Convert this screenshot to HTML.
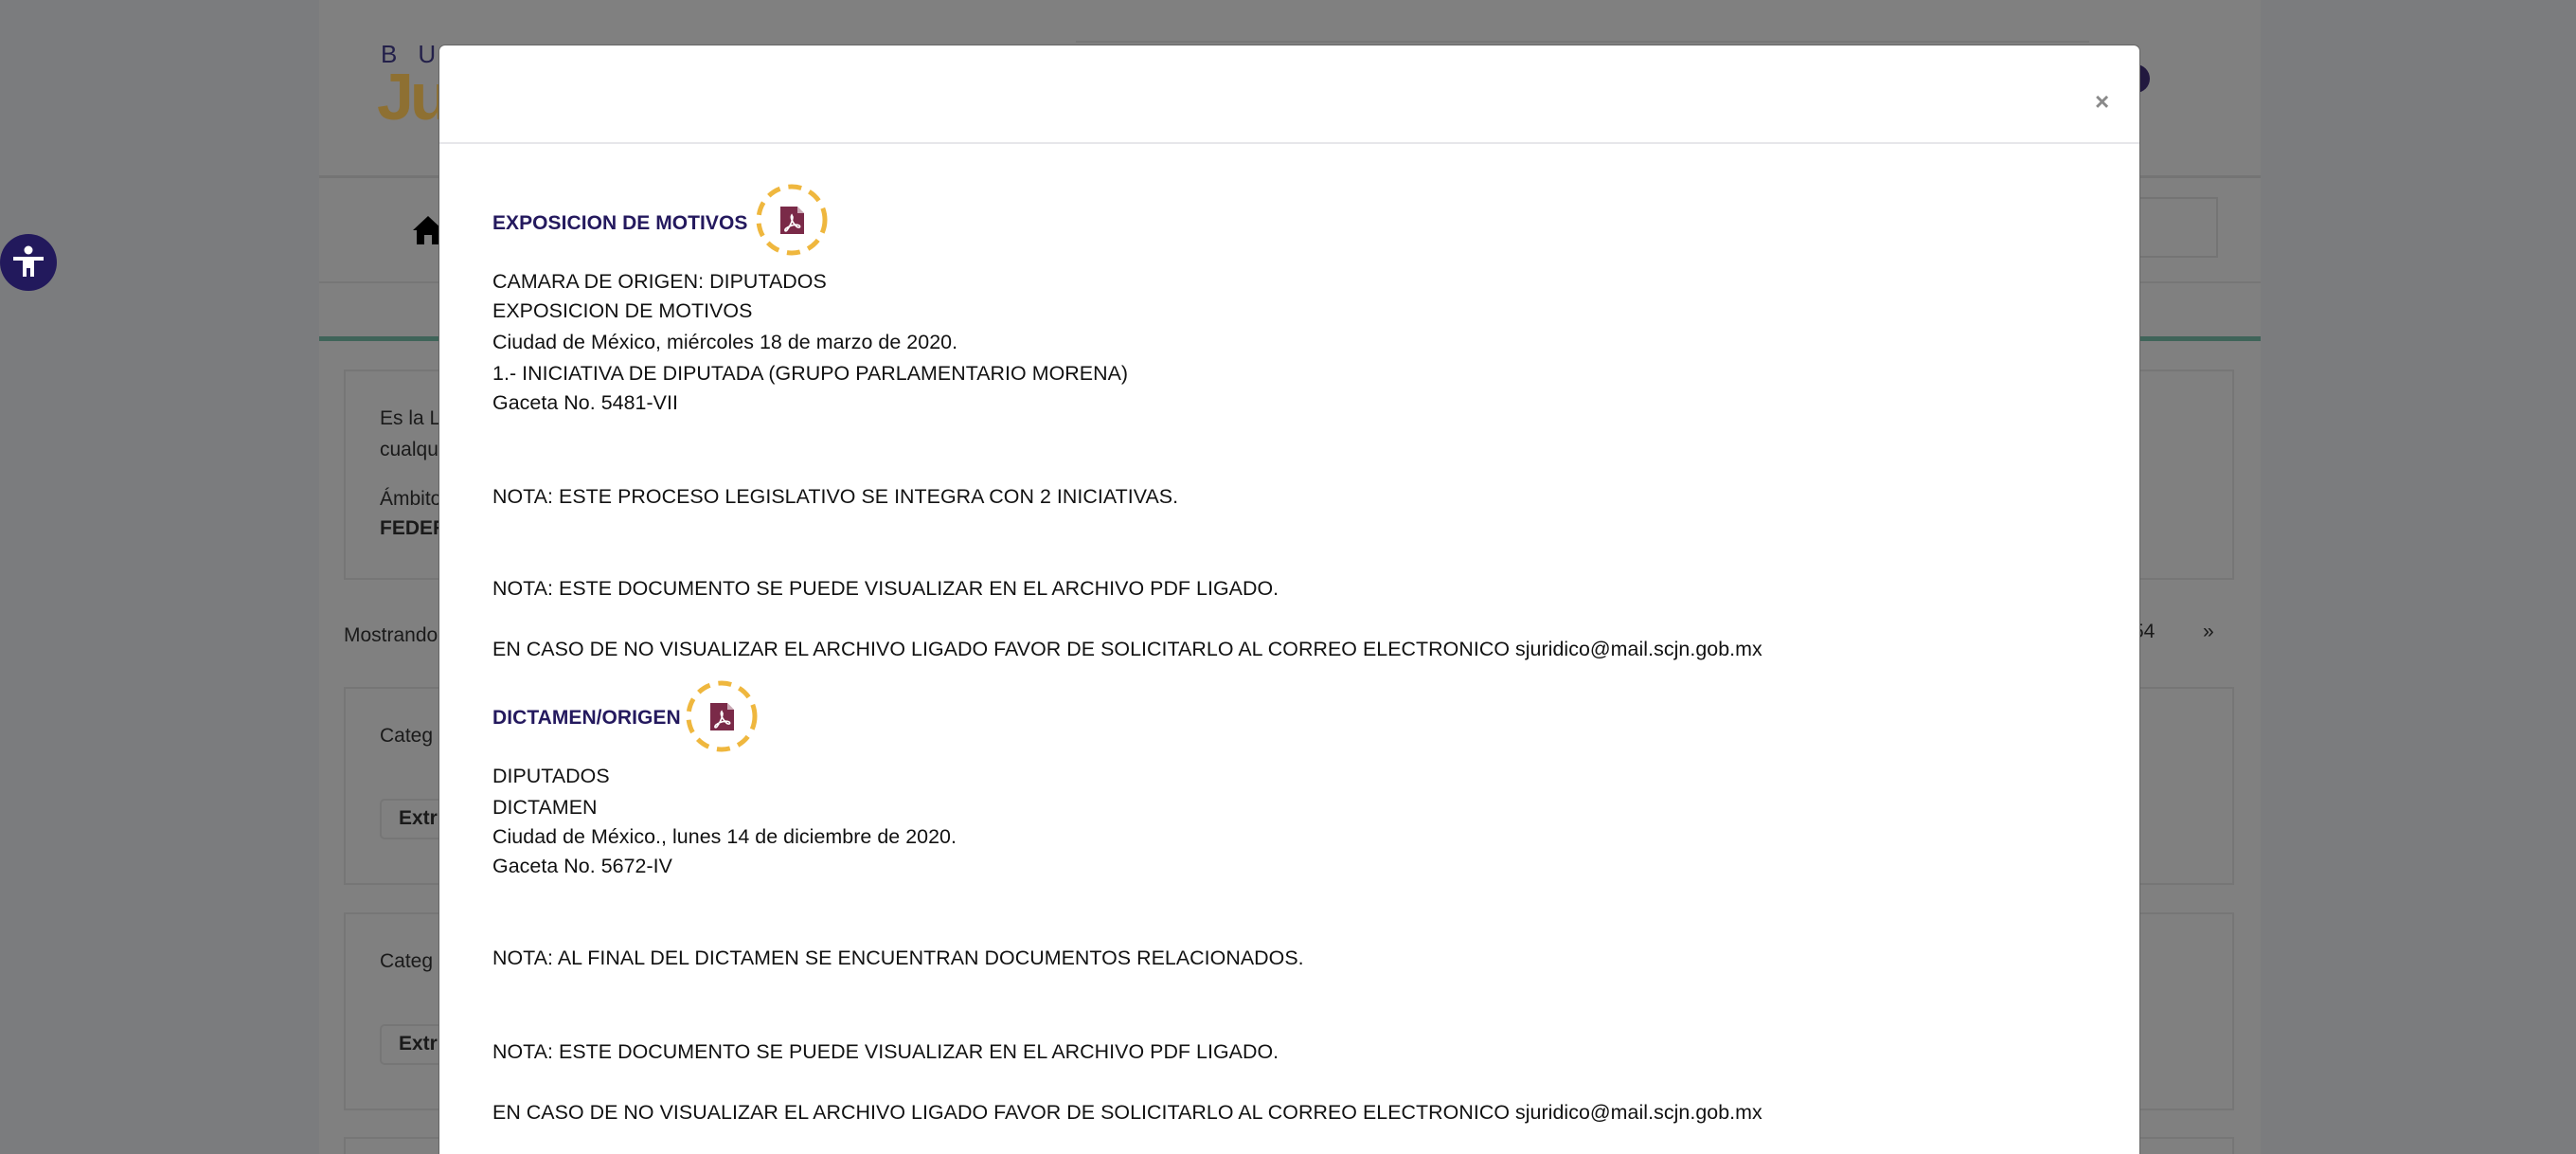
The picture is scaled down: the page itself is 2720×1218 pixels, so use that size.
<!DOCTYPE html>
<html style="overflow:hidden;height:1218px"><head><meta charset="utf-8"><style>
*{margin:0;padding:0;box-sizing:border-box}
body{width:2720px;height:1218px;overflow:hidden;background:#7b7c7e;position:relative;font-family:"Liberation Sans",Arial,sans-serif}
.a{position:absolute}
.bgt{color:#1a1a1a;font-size:21px;white-space:nowrap}
.card{position:absolute;left:363px;width:1996px;border:2px solid #767676;background:#808080}
.t{position:absolute;left:520px;height:32px;line-height:32px;font-size:21.4px;letter-spacing:0.05px;color:#111;white-space:nowrap}
.h{font-weight:bold;color:#24195e;font-size:21px}
</style></head><body>
<div class="a" style="left:337px;top:0;width:2050px;height:1218px;background:#808080"></div>
<div class="a" style="left:337px;top:185px;width:2050px;height:3px;background:#747474"></div>
<div class="a" style="left:337px;top:297px;width:2050px;height:2px;background:#767676"></div>
<div class="a" style="left:337px;top:355px;width:2050px;height:5px;background:#3f6459"></div>
<div class="a" style="left:402px;top:42px;font-size:26px;color:#23204a;letter-spacing:22px">BUS</div>
<div class="a" style="left:398px;top:62px;font-size:70px;font-weight:bold;color:#8e7032;letter-spacing:-4px">Ju</div>
<div class="a" style="left:1136px;top:43px;width:1070px;height:2px;background:#767676"></div>
<div class="a" style="left:2240px;top:68px;width:30px;height:30px;border-radius:50%;background:#22193f"></div>
<svg class="a" style="left:434px;top:225px" width="36" height="36" viewBox="0 0 36 36"><path d="M18 3 L2 18 L6 18 L6 33 L14 33 L14 23 L22 23 L22 33 L30 33 L30 18 L34 18 Z" fill="#000"/></svg>
<div class="a" style="left:2177px;top:208px;width:165px;height:64px;border:2px solid #747474"></div>
<div class="card" style="top:390px;height:222px"></div>
<div class="a bgt" style="left:401px;top:430px">Es la L</div>
<div class="a bgt" style="left:401px;top:463px">cualqu</div>
<div class="a bgt" style="left:401px;top:515px">Ámbito</div>
<div class="a bgt" style="left:401px;top:546px;font-weight:bold">FEDER</div>
<div class="a bgt" style="left:363px;top:659px">Mostrando</div>
<div class="a bgt" style="left:2252px;top:655px">54</div>
<div class="a bgt" style="left:2326px;top:655px">»</div>
<div class="card" style="top:725px;height:209px"></div>
<div class="a bgt" style="left:401px;top:765px">Categ</div>
<div class="a" style="left:401px;top:843px;width:200px;height:43px;border:2px solid #767676;border-radius:5px"></div>
<div class="a bgt" style="left:421px;top:852px;font-weight:bold">Extr</div>
<div class="card" style="top:963px;height:209px"></div>
<div class="a bgt" style="left:401px;top:1003px">Categ</div>
<div class="a" style="left:401px;top:1081px;width:200px;height:43px;border:2px solid #767676;border-radius:5px"></div>
<div class="a bgt" style="left:421px;top:1090px;font-weight:bold">Extr</div>
<div class="card" style="top:1200px;height:18px;border-bottom:none"></div>
<div class="a" style="left:0;top:247px;width:60px;height:60px;border-radius:50%;background:#22195c"></div>
<svg class="a" style="left:0;top:247px" width="60" height="60" viewBox="0 0 60 60"><circle cx="30" cy="17" r="4.5" fill="#fff"/><path d="M14 24 L46 24 L46 28 L36 28 L36 45 L32 45 L32 36 L28 36 L28 45 L24 45 L24 28 L14 28 Z" fill="#fff"/></svg>
<!-- modal -->
<div class="a" style="left:463px;top:47px;width:1797px;height:1171px;background:#fff;border-radius:7px 7px 0 0;border:1px solid #666;border-bottom:none"></div>
<div class="a" style="left:464px;top:150px;width:1795px;height:2px;background:#e6e6ea"></div>
<div class="a" style="left:2212px;top:92px;font-size:26px;font-weight:bold;color:#8a8a8a">×</div>

<div class="t h" style="top:220px">EXPOSICION DE MOTIVOS</div>
<svg class="a" style="left:796px;top:194px" width="80" height="80" viewBox="0 0 80 80"><circle cx="40" cy="38" r="35" fill="none" stroke="#efb73e" stroke-width="5" stroke-dasharray="14 9"/><path d="M28 24 H46 L53 31 V53 H28 Z" fill="#7a2a48"/><path d="M46 24 V31 H53" fill="#fff" opacity=".6"/><path d="M40 33 C38 36 41 41 45 45 C47 47 50 46 48 44 C45 42 38 44 34 47 C32 49 33 51 35 49 C38 45 41 39 41 35 Z" fill="none" stroke="#fff" stroke-width="1.6"/></svg>
<div class="t" style="top:281px">CAMARA DE ORIGEN: DIPUTADOS</div>
<div class="t" style="top:312px">EXPOSICION DE MOTIVOS</div>
<div class="t" style="top:345px">Ciudad de México, miércoles 18 de marzo de 2020.</div>
<div class="t" style="top:378px">1.- INICIATIVA DE DIPUTADA (GRUPO PARLAMENTARIO MORENA)</div>
<div class="t" style="top:409px">Gaceta No. 5481-VII</div>
<div class="t" style="top:508px">NOTA: ESTE PROCESO LEGISLATIVO SE INTEGRA CON 2 INICIATIVAS.</div>
<div class="t" style="top:605px">NOTA: ESTE DOCUMENTO SE PUEDE VISUALIZAR EN EL ARCHIVO PDF LIGADO.</div>
<div class="t" style="top:669px">EN CASO DE NO VISUALIZAR EL ARCHIVO LIGADO FAVOR DE SOLICITARLO AL CORREO ELECTRONICO sjuridico@mail.scjn.gob.mx</div>

<div class="t h" style="top:742px">DICTAMEN/ORIGEN</div>
<svg class="a" style="left:722px;top:718px" width="80" height="80" viewBox="0 0 80 80"><circle cx="40" cy="38" r="35" fill="none" stroke="#efb73e" stroke-width="5" stroke-dasharray="14 9"/><path d="M28 24 H46 L53 31 V53 H28 Z" fill="#7a2a48"/><path d="M46 24 V31 H53" fill="#fff" opacity=".6"/><path d="M40 33 C38 36 41 41 45 45 C47 47 50 46 48 44 C45 42 38 44 34 47 C32 49 33 51 35 49 C38 45 41 39 41 35 Z" fill="none" stroke="#fff" stroke-width="1.6"/></svg>
<div class="t" style="top:803px">DIPUTADOS</div>
<div class="t" style="top:836px">DICTAMEN</div>
<div class="t" style="top:867px">Ciudad de México., lunes 14 de diciembre de 2020.</div>
<div class="t" style="top:898px">Gaceta No. 5672-IV</div>
<div class="t" style="top:995px">NOTA: AL FINAL DEL DICTAMEN SE ENCUENTRAN DOCUMENTOS RELACIONADOS.</div>
<div class="t" style="top:1094px">NOTA: ESTE DOCUMENTO SE PUEDE VISUALIZAR EN EL ARCHIVO PDF LIGADO.</div>
<div class="t" style="top:1158px">EN CASO DE NO VISUALIZAR EL ARCHIVO LIGADO FAVOR DE SOLICITARLO AL CORREO ELECTRONICO sjuridico@mail.scjn.gob.mx</div>
</body></html>
